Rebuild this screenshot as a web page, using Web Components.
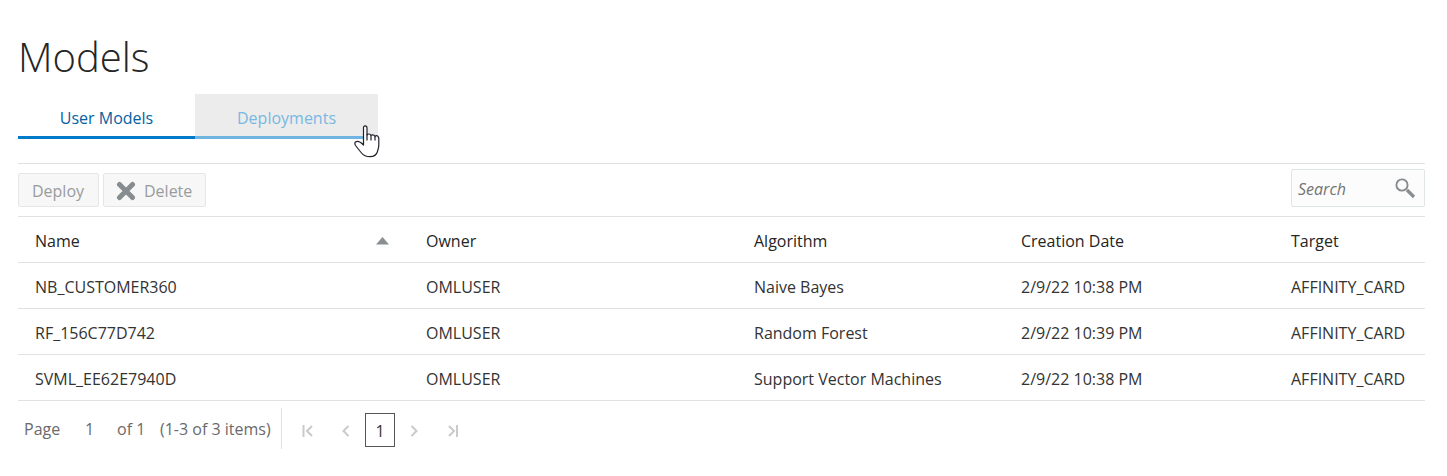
<!DOCTYPE html>
<html lang="en">
<head>
<meta charset="utf-8">
<title>Models</title>
<style>
body { margin: 0; background: #fff; color: #333; font: 16px/24px "Open Sans", "Noto Sans", sans-serif; }
</style>
</head>
<body>
<models-page>
  <span slot="title">Models</span>
  <tab-strip slot="tabs">
    <tab-item selected>User Models</tab-item>
    <tab-item hovered>Deployments</tab-item>
  </tab-strip>
  <tool-bar slot="tools">
    <tool-button>Deploy</tool-button>
    <tool-button icon="delete">Delete</tool-button>
    <search-box slot="end"></search-box>
  </tool-bar>
  <models-table></models-table>
  <page-nav></page-nav>
</models-page>
<script>
class Base extends HTMLElement {
  connectedCallback() {
    if (this.shadowRoot) return;
    const root = this.attachShadow({ mode: "open" });
    const t = document.createElement("template");
    t.innerHTML = this.render();
    root.append(t.content.cloneNode(true));
  }
}

customElements.define("models-page", class extends Base {
  render() {
    return `<style>
      :host { display: block; padding: 33px 22px 24px 18px; }
      h1 { margin: 0 0 13px; font-size: 40px; line-height: 48px; font-weight: 300; color: #252525; }
      main { display: flex; flex-direction: column; }
      .panel { margin-top: 24px; border-top: 1px solid #dfe1e3; }
    </style>
    <main>
      <h1><slot name="title"></slot></h1>
      <slot name="tabs"></slot>
      <div class="panel"><slot name="tools"></slot><slot></slot></div>
    </main>`;
  }
});

customElements.define("tab-strip", class extends Base {
  render() {
    return `<style>
      :host { display: block; }
      div { display: flex; }
    </style><div role="tablist"><slot></slot></div>`;
  }
});

customElements.define("tab-item", class extends Base {
  render() {
    const cursor = this.hasAttribute("hovered") ? `<svg viewBox="0 0 26 33" width="26" height="33" aria-hidden="true">
      <path d="M9.500 19V3Q9.500 .8 11.200 .8T13 3V10Q13.500 9 15 9T17 10.500Q17.500 9.800 18.800 9.800T21 11.500Q21.500 10.600 22.800 10.600T24.800 13V20C24.800 23 24 24 23.500 26.500C22.500 30 20 31.700 16 31.700C12 31.700 9.500 30.500 7.500 28L1.500 20.500Q.2 18 1.500 17C4 15.500 6.500 17 9.500 20Z" fill="#fff" stroke="#20202c" stroke-width="1.2" stroke-linejoin="round"/>
      <path d="M13 9.500V15.500M17 10.500V15.500M21 11.500V15.500" fill="none" stroke="#20202c" stroke-width="1.2"/></svg>` : "";
    return `<style>
      :host { display: block; position: relative; width: 177px; }
      :host([hovered]) { width: 183px; }
      button { width: 100%; height: 45px; padding: 5px 0 0; border: 0; border-bottom: 3px solid #007ac9; background: #fff; color: #04629f; font: inherit; }
      :host([hovered]) button { background: #ececec; color: #78b8e2; border-color: #70b5e2; }
      svg { position: absolute; top: 31px; right: -2px; pointer-events: none; }
    </style><button role="tab" aria-selected="${this.hasAttribute("selected")}"><slot></slot></button>${cursor}`;
  }
});

customElements.define("tool-bar", class extends Base {
  render() {
    return `<style>
      :host { display: flex; justify-content: space-between; align-items: flex-end; padding: 5px 0 9px; }
      div { display: flex; gap: 4px; }
    </style><div><slot></slot></div><slot name="end"></slot>`;
  }
});

customElements.define("tool-button", class extends Base {
  render() {
    const icon = this.getAttribute("icon") === "delete"
      ? `<svg viewBox="0 0 20 20" width="20" height="20" aria-hidden="true"><path d="M3.500 3.500L16.500 16.500M16.500 3.500L3.500 16.500" stroke="#878c90" stroke-width="5" stroke-linecap="round"/></svg>` : "";
    return `<style>
      :host { display: block; }
      button { display: flex; align-items: center; justify-content: center; gap: 8px; box-sizing: border-box; min-width: 81px; height: 34px; padding: 1px 13px 0 12px; border: 1px solid #e4e6e8; border-radius: 2px; background: #f7f7f7; color: #999b9d; font: inherit; }
    </style><button disabled>${icon}<slot></slot></button>`;
  }
});

customElements.define("search-box", class extends Base {
  render() {
    return `<style>
      :host { display: flex; align-items: center; box-sizing: border-box; width: 134px; height: 38px; padding: 0 8px 0 6px; border: 1px solid #dfe4e7; border-radius: 2px; background: #fcfcfc; }
      input { flex: 1; min-width: 0; padding: 2px 0 0; border: 0; outline: 0; background: none; font: inherit; color: #333; }
      input::placeholder { color: #737373; font-style: italic; opacity: 1; }
      button { display: flex; padding: 0; border: 0; background: none; }
    </style>
    <input type="text" placeholder="Search" aria-label="Search">
    <button aria-label="Run search"><svg viewBox="0 0 22 22" width="22" height="22" fill="none" aria-hidden="true"><circle cx="8" cy="8" r="5.600" stroke="#878c90" stroke-width="1.900"/><path d="M13 13L20 20" stroke="#878c90" stroke-width="3.200"/></svg></button>`;
  }
});

customElements.define("models-table", class extends Base {
  render() {
    const rows = [
      ["NB_CUSTOMER360", "OMLUSER", "Naive Bayes", "2/9/22 10:38 PM", "AFFINITY_CARD"],
      ["RF_156C77D742", "OMLUSER", "Random Forest", "2/9/22 10:39 PM", "AFFINITY_CARD"],
      ["SVML_EE62E7940D", "OMLUSER", "Support Vector Machines", "2/9/22 10:38 PM", "AFFINITY_CARD"]
    ];
    return `<style>
      :host { display: block; border-top: 1px solid #dfe1e3; }
      table { width: 100%; table-layout: fixed; border-collapse: separate; border-spacing: 0; }
      th, td { box-sizing: border-box; height: 46px; padding: 3px 0 0 17px; border-bottom: 1px solid #dfe1e3; text-align: left; font-weight: 400; white-space: nowrap; }
      th { color: #252525; }
      .sort { display: flex; justify-content: space-between; align-items: center; padding-right: 20px; }
      .a { width: 391px; } .b { width: 328px; } .c { width: 267px; } .d { width: 270px; } .e { width: 151px; }
    </style>
    <table>
      <colgroup><col class="a"><col class="b"><col class="c"><col class="d"><col class="e"></colgroup>
      <thead><tr>
        <th scope="col" aria-sort="ascending"><div class="sort">Name<svg viewBox="0 0 13 8" width="13" height="8" aria-hidden="true"><path d="M6.500 0L13 7.500H0Z" fill="#8a8f92"/></svg></div></th>
        <th scope="col">Owner</th><th scope="col">Algorithm</th><th scope="col">Creation Date</th><th scope="col">Target</th>
      </tr></thead>
      <tbody>${rows.map(r => `<tr>${r.map(c => `<td>${c}</td>`).join("")}</tr>`).join("")}</tbody>
    </table>`;
  }
});

customElements.define("page-nav", class extends Base {
  render() {
    const nav = (label, d) => `<button aria-label="${label}" disabled><svg viewBox="0 0 12 12" width="12" height="12" fill="none" stroke="#c8cacc" stroke-width="2" aria-hidden="true"><path d="${d}"/></svg></button>`;
    return `<style>
      :host { display: flex; padding-top: 7px; color: #6a6a6a; }
      .info { display: flex; align-items: center; box-sizing: border-box; height: 41px; width: 264px; padding-left: 6px; border-right: 1px solid #dfe1e3; white-space: nowrap; }
      label { width: 50px; }
      input { box-sizing: border-box; width: 31px; margin-right: 12px; padding: 0; border: 0; background: none; text-align: center; font: inherit; color: inherit; }
      .of { width: 43px; }
      .pages { display: flex; align-items: center; padding: 3px 0 0 7px; }
      button { display: flex; align-items: center; justify-content: center; box-sizing: border-box; width: 38px; height: 34px; padding: 2px 0 0; border: 0; background: none; color: #333; font: inherit; }
      .current { width: 30px; border: 1px solid #555; }
    </style>
    <div class="info"><label for="page">Page</label><input id="page" value="1"><span class="of">of 1</span><span>(1-3 of 3 items)</span></div>
    <div class="pages">
      ${nav("First page", "M1.500 0V12M10 1L5 6L10 11")}
      ${nav("Previous page", "M8.500 1L3.500 6L8.500 11")}
      <button class="current" aria-current="page">1</button>
      ${nav("Next page", "M3.500 1L8.500 6L3.500 11")}
      ${nav("Last page", "M11 0V12M3 1L8 6L3 11")}
    </div>`;
  }
});
</script>
</body>
</html>
